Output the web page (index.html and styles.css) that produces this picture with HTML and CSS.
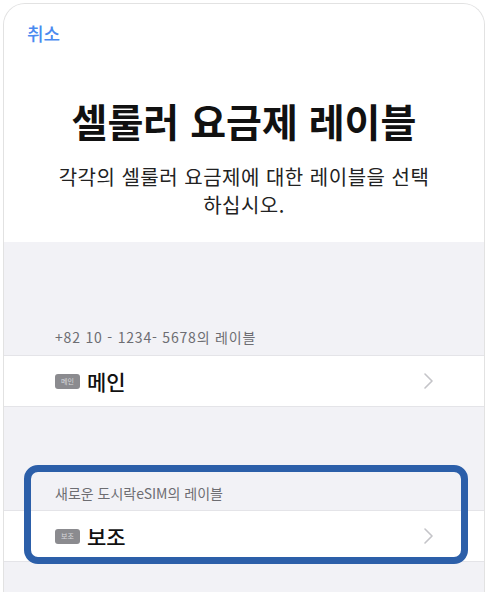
FILE: index.html
```html
<!DOCTYPE html>
<html lang="ko">
<head>
    <meta charset="UTF-8" />
    <title>셀룰러 요금제 레이블</title>
    <link rel="stylesheet" href="styles.css">
</head>
<body>
    <div class="phone">
        <div class="top">
            <a class="cancel" href="">취소</a>
            <h1 class="title">셀룰러 요금제 레이블</h1>
            <p class="subtitle">각각의 셀룰러 요금제에 대한 레이블을 선택<br>하십시오.</p>
        </div>

        <div class="settings">
            <div class="group first">
                <div class="section-label">+82 10 - 1234- 5678의 레이블</div>
                <div class="row">
                    <span class="badge">메인</span>
                    <span class="row-text">메인</span>
                    <svg class="chevron" width="9" height="16" viewBox="0 0 9 16">
                        <path d="M1 1 L8 8 L1 15" fill="none" stroke="#c4c4c8" stroke-width="1.6" stroke-linecap="round" stroke-linejoin="round"/>
                    </svg>
                </div>
            </div>

            <div class="group highlight">
                <div class="section-label">새로운 도시락eSIM의 레이블</div>
                <div class="row">
                    <span class="badge">보조</span>
                    <span class="row-text">보조</span>
                    <svg class="chevron" width="9" height="16" viewBox="0 0 9 16">
                        <path d="M1 1 L8 8 L1 15" fill="none" stroke="#c4c4c8" stroke-width="1.6" stroke-linecap="round" stroke-linejoin="round"/>
                    </svg>
                </div>
                <div class="highlight-box"></div>
            </div>
        </div>
    </div>
</body>
</html>
```

FILE: styles.css
```css
* {
    margin: 0;
    padding: 0;
    box-sizing: border-box;
    font-family: "Noto Sans CJK KR", "Noto Sans", sans-serif;
}

body {
    background-color: #fff;
    overflow: hidden;
    height: 592px;
}

.phone {
    margin: 3px 5px 0 3px;
    height: 589px;
    border: 1px solid #e2e2e2;
    border-bottom: none;
    border-radius: 22px 22px 0 0;
    overflow: hidden;
    background-color: #f2f2f6;
}

.top {
    background-color: #fff;
    padding: 19px 0 23px;
    text-align: center;
}

.cancel {
    display: block;
    text-align: left;
    padding-left: 23px;
    color: #4a8af0;
    text-decoration: none;
    font-size: 18px;
    line-height: 20px;
    font-weight: 500;
}

.title {
    margin-top: 55px;
    font-size: 39px;
    line-height: 44px;
    font-weight: 700;
    color: #111;
}

.subtitle {
    margin-top: 21px;
    font-size: 20px;
    line-height: 28px;
    letter-spacing: 0.5px;
    color: #222;
}

.settings {
    padding-top: 86px;
}

.group {
    margin-bottom: 77px;
}

.section-label {
    padding: 0 51px;
    font-size: 14px;
    line-height: 18px;
    color: #6d6d72;
    margin-bottom: 9px;
}

.first .section-label {
    letter-spacing: 0.8px;
}

.highlight .section-label {
    margin-bottom: 8px;
}

.row {
    display: flex;
    align-items: center;
    height: 52px;
    padding: 0 51px;
    background-color: #fff;
    border-top: 1px solid #e4e4e8;
    border-bottom: 1px solid #e4e4e8;
}

.badge {
    width: 25px;
    height: 15px;
    border-radius: 3px;
    background-color: #8b8b8f;
    color: #d8d8dc;
    font-size: 7px;
    line-height: 15px;
    text-align: center;
    margin-right: 7px;
}

.row-text {
    flex: 1;
    font-size: 21px;
    font-weight: 500;
    color: #111;
}

.chevron {
    display: block;
}

.highlight {
    position: relative;
}

.highlight-box {
    position: absolute;
    left: 20px;
    right: 16px;
    top: -19px;
    bottom: -2px;
    border: 7px solid #2c5fa9;
    border-radius: 14px;
}
```
